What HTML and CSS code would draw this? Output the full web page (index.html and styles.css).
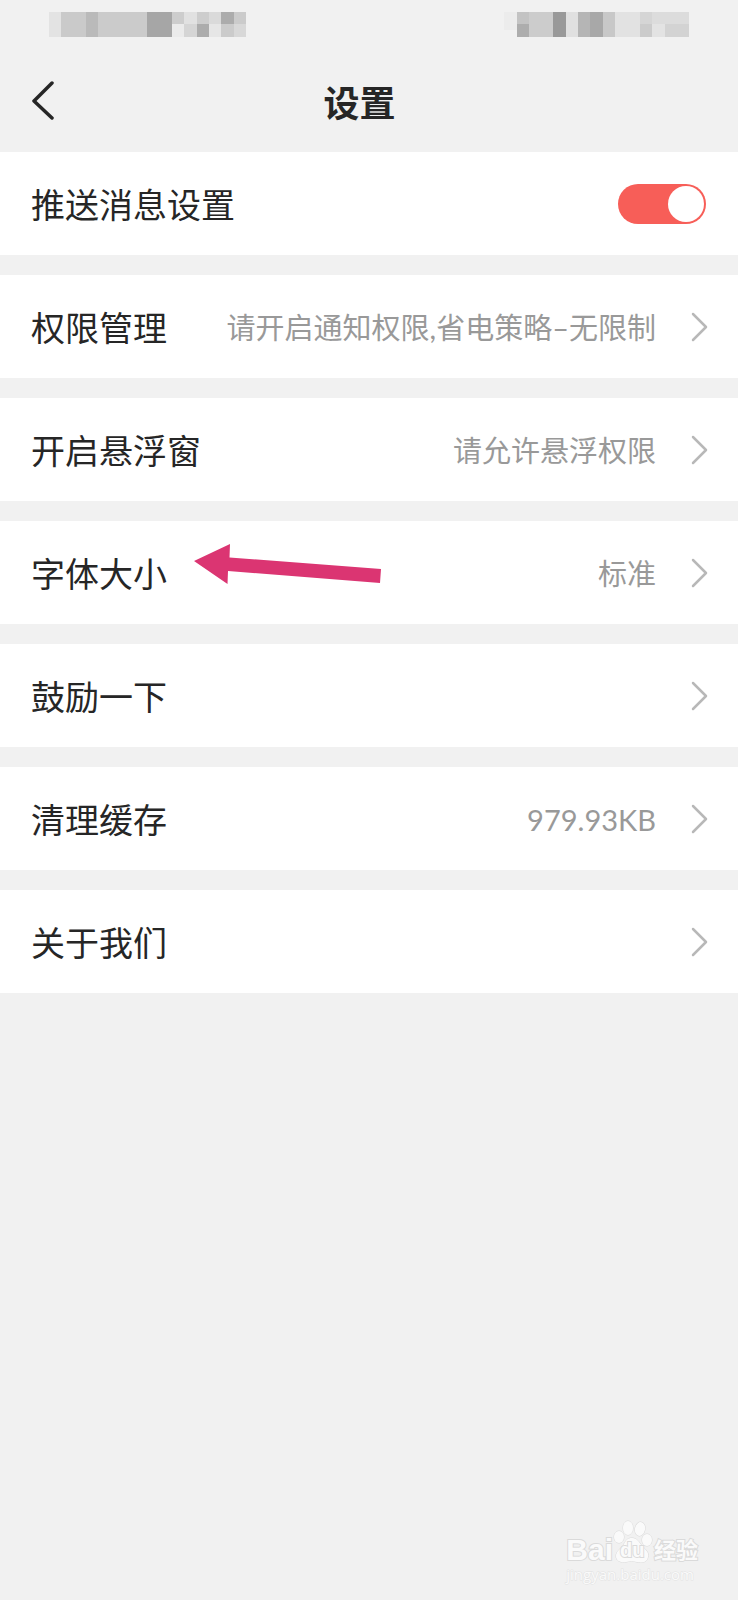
FILE: index.html
```
<!DOCTYPE html>
<html lang="zh-CN">
<head>
    <meta charset="UTF-8">
    <meta name="viewport" content="width=device-width, initial-scale=1.0">
    <title>设置</title>
    <link rel="stylesheet" href="styles.css">
</head>
<body>

    <!-- Status bar -->
    <div class="status-bar">
        <svg width="197" height="25" viewBox="0 0 197 25" shape-rendering="crispEdges" aria-hidden="true">
            <rect x="0" width="12" height="25" fill="#e3e3e3"/>
            <rect x="12" width="25" height="25" fill="#cacaca"/>
            <rect x="37" width="12" height="25" fill="#bababa"/>
            <rect x="49" width="49" height="25" fill="#cbcbcb"/>
            <rect x="98" width="25" height="25" fill="#a6a6a6"/>
            <rect x="123" width="12" height="12" fill="#cdcdcd"/>
            <rect x="123" y="12" width="12" height="13" fill="#ebebeb"/>
            <rect x="135" width="13" height="12" fill="#e1e1e1"/>
            <rect x="135" y="12" width="13" height="13" fill="#d5d5d5"/>
            <rect x="148" width="12" height="12" fill="#cdcdcd"/>
            <rect x="148" y="12" width="12" height="13" fill="#acacac"/>
            <rect x="160" width="12" height="12" fill="#dadada"/>
            <rect x="160" y="12" width="12" height="13" fill="#e6e6e6"/>
            <rect x="172" width="13" height="12" fill="#acacac"/>
            <rect x="172" y="12" width="13" height="13" fill="#cbcbcb"/>
            <rect x="185" width="12" height="12" fill="#cbcbcb"/>
            <rect x="185" y="12" width="12" height="13" fill="#d8d8d8"/>
        </svg>
        <svg width="185" height="25" viewBox="0 0 185 25" shape-rendering="crispEdges" aria-hidden="true">
            <rect x="0" width="13" height="18" fill="#ececec"/>
            <rect x="13" width="12" height="12" fill="#c3c3c3"/>
            <rect x="13" y="12" width="12" height="13" fill="#adadad"/>
            <rect x="25" width="24" height="25" fill="#cccccc"/>
            <rect x="49" width="13" height="25" fill="#999999"/>
            <rect x="62" width="12" height="25" fill="#e0e0e0"/>
            <rect x="74" width="12" height="25" fill="#b5b5b5"/>
            <rect x="86" width="13" height="25" fill="#a8a8a8"/>
            <rect x="99" width="12" height="25" fill="#c8c8c8"/>
            <rect x="111" width="25" height="25" fill="#e2e2e2"/>
            <rect x="136" width="12" height="12" fill="#d5d5d5"/>
            <rect x="136" y="12" width="12" height="13" fill="#cbcbcb"/>
            <rect x="148" width="37" height="12" fill="#dcdcdc"/>
            <rect x="148" y="12" width="13" height="13" fill="#e3e3e3"/>
            <rect x="161" y="12" width="24" height="13" fill="#d3d3d3"/>
        </svg>
    </div>

    <header class="nav">
        <button class="back" type="button" aria-label="返回">
            <svg width="24" height="42" viewBox="0 0 24 42" aria-hidden="true">
                <path d="M22 3 L4 21 L22 38" fill="none" stroke="#262626" stroke-width="3.5" stroke-linecap="round" stroke-linejoin="round"/>
            </svg>
        </button>
        <h1>设置</h1>
    </header>

    <!-- Settings list -->
    <main class="list">
        <div class="row">
            <label class="name" for="push">推送消息设置</label>
            <input class="switch" type="checkbox" id="push" checked>
        </div>
        <a class="row" href="#">
            <span class="name">权限管理</span>
            <span class="value">请开启通知权限,省电策略–无限制</span>
            <svg class="chevron" viewBox="0 0 18 30" aria-hidden="true"><path d="M3 2 L16 15 L3 28"/></svg>
        </a>
        <a class="row" href="#">
            <span class="name">开启悬浮窗</span>
            <span class="value">请允许悬浮权限</span>
            <svg class="chevron" viewBox="0 0 18 30" aria-hidden="true"><path d="M3 2 L16 15 L3 28"/></svg>
        </a>
        <a class="row" href="#">
            <span class="name">字体大小</span>
            <svg class="pointer" viewBox="0 0 187 41" aria-hidden="true">
                <polygon points="0,18 36,1 35.5,14.5 187,26 186,40 34,28 33.5,41" fill="#db3572"/>
            </svg>
            <span class="value">标准</span>
            <svg class="chevron" viewBox="0 0 18 30" aria-hidden="true"><path d="M3 2 L16 15 L3 28"/></svg>
        </a>
        <a class="row" href="#">
            <span class="name">鼓励一下</span>
            <svg class="chevron" viewBox="0 0 18 30" aria-hidden="true"><path d="M3 2 L16 15 L3 28"/></svg>
        </a>
        <a class="row" href="#">
            <span class="name">清理缓存</span>
            <span class="value">979.93KB</span>
            <svg class="chevron" viewBox="0 0 18 30" aria-hidden="true"><path d="M3 2 L16 15 L3 28"/></svg>
        </a>
        <a class="row" href="#">
            <span class="name">关于我们</span>
            <svg class="chevron" viewBox="0 0 18 30" aria-hidden="true"><path d="M3 2 L16 15 L3 28"/></svg>
        </a>
    </main>

    <!-- Watermark -->
    <footer class="watermark">
        <div class="brand">
            <span class="bai">Bai</span>
            <span class="paw">
                <svg width="40" height="44" viewBox="0 0 40 44" fill="#fafafa" stroke="#dadada" aria-hidden="true">
                    <ellipse cx="6" cy="17" rx="5" ry="6"/>
                    <ellipse cx="15" cy="8" rx="5" ry="7"/>
                    <ellipse cx="27" cy="9" rx="5" ry="7" transform="rotate(12 27 9)"/>
                    <ellipse cx="34" cy="20" rx="5" ry="6"/>
                    <path d="M19 18 C24 18 26 22 29 26 C33 30 36 32 35 37 C34 43 28 43 24 42 C20 41 17 41 13 42 C8 43 3 41 3 36 C3 31 8 29 11 24 C13 20 15 18 19 18 Z"/>
                </svg>
                <span class="du">du</span>
            </span>
            <span class="exp">经验</span>
        </div>
        <div class="site">jingyan.baidu.com</div>
    </footer>

</body>
</html>
```

FILE: styles.css
```
* {
    box-sizing: border-box;
}

body {
    margin: 0;
    min-height: 100vh;
    display: flex;
    flex-direction: column;
    background-color: #f1f1f1;
    color: #262626;
    font-family: Lato, "Noto Sans CJK SC", sans-serif;
}

svg {
    display: block;
    flex-shrink: 0;
}

.status-bar {
    display: flex;
    justify-content: space-between;
    height: 50px;
    padding: 12px 49px 0;
}

.nav {
    display: grid;
    grid-template-columns: 1fr auto 1fr;
    align-items: center;
    height: 102px;
    padding: 0 49px 0 30px;
}

.nav h1 {
    margin: 0;
    font-family: "Noto Sans CJK SC", sans-serif;
    font-size: 36px;
    line-height: 48px;
    font-weight: bold;
}

.back {
    justify-self: start;
    padding: 0;
    border: 0;
    background: none;
}

.list {
    display: flex;
    flex-direction: column;
    gap: 20px;
}

.row {
    position: relative;
    display: flex;
    align-items: center;
    height: 103px;
    padding: 0 30px 0 31px;
    background-color: #fff;
    color: inherit;
    text-decoration: none;
}

.name,
.value {
    padding-top: 2px;
    line-height: 48px;
}

.name {
    margin-right: auto;
    font-size: 34px;
}

.value {
    font-size: 29px;
    color: #999;
}

.chevron {
    width: 18px;
    height: 30px;
    margin-left: 34px;
    fill: none;
    stroke: #b8b8b8;
    stroke-width: 2.5;
    stroke-linecap: round;
    stroke-linejoin: round;
}

.switch {
    appearance: none;
    display: flex;
    align-items: center;
    width: 88px;
    height: 40px;
    margin: 0 2px 0 0;
    padding: 2px;
    border-radius: 20px;
    background-color: #ccc;
}

.switch::before {
    content: "";
    width: 36px;
    height: 36px;
    border-radius: 50%;
    background-color: #fff;
}

.switch:checked {
    justify-content: flex-end;
    background-color: #f75e58;
}

/* arrow lies over the row */
.pointer {
    position: absolute;
    left: 194px;
    top: 22px;
    width: 187px;
    height: 41px;
}

.watermark {
    align-self: flex-end;
    margin-top: auto;
    padding: 0 40px 16px 0;
    color: #fafafa;
    -webkit-text-stroke: 2px #dadada;
    paint-order: stroke fill;
}

.brand {
    display: flex;
    align-items: flex-end;
}

.bai {
    font-family: "Liberation Sans", sans-serif;
    font-size: 30px;
    line-height: 28px;
    font-weight: bold;
}

.paw {
    position: relative;
}

.du {
    position: absolute;
    left: 7px;
    bottom: 4px;
    font-family: "Liberation Sans", sans-serif;
    font-size: 20px;
    line-height: 20px;
    font-weight: bold;
}

.exp {
    margin-left: 1px;
    font-size: 22px;
    line-height: 28px;
    font-weight: bold;
}

.site {
    font-family: "Open Sans", sans-serif;
    font-size: 15px;
    line-height: 20px;
    -webkit-text-stroke: 1px #e2e2e2;
}
```
